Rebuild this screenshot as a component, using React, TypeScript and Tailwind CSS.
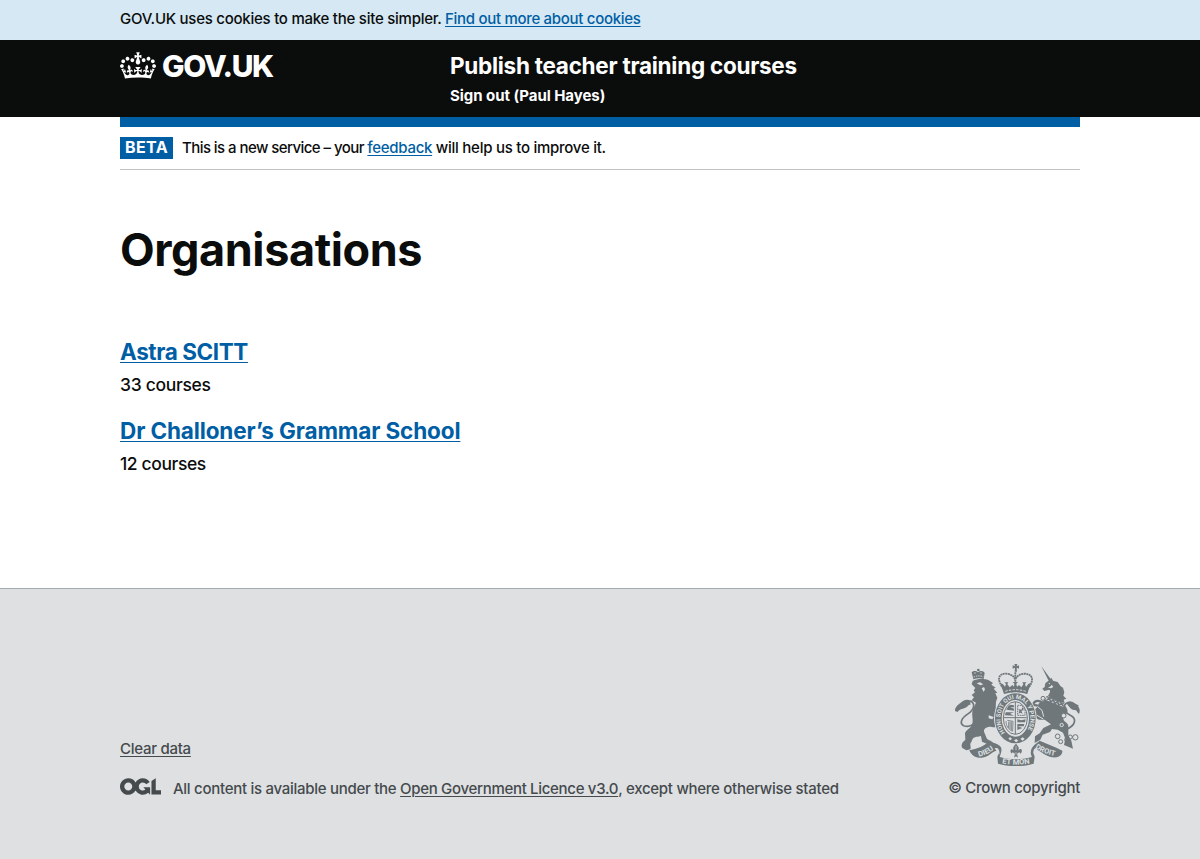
import type { ReactNode } from "react";

function Crown() {
  return (
    <svg viewBox="0 0 132 97" className="h-[27px] w-9 shrink-0 fill-white" aria-hidden="true">
      <path
        fillRule="evenodd"
        d="M25 30.2c3.5 1.5 7.7-.2 9.1-3.7 1.5-3.6-.2-7.8-3.9-9.2-3.6-1.4-7.6.3-9.1 3.9-1.4 3.5.3 7.5 3.9 9zM9 39.5c3.6 1.5 7.8-.2 9.2-3.7 1.5-3.6-.2-7.8-3.9-9.1-3.6-1.5-7.6.2-9.1 3.8-1.4 3.5.3 7.5 3.8 9zM4.4 57.2c3.5 1.5 7.7-.2 9.1-3.8 1.5-3.6-.2-7.7-3.9-9.1-3.5-1.5-7.6.3-9.1 3.8-1.4 3.5.3 7.6 3.9 9.1zm38.3-21.4c3.5 1.5 7.7-.2 9.1-3.8 1.5-3.6-.2-7.7-3.9-9.1-3.6-1.5-7.6.3-9.1 3.8-1.3 3.6.4 7.7 3.9 9.1zm64.4-5.6c-3.6 1.5-7.8-.2-9.1-3.7-1.5-3.6.2-7.8 3.8-9.2 3.6-1.4 7.7.3 9.2 3.9 1.3 3.5-.4 7.5-3.9 9zm15.9 9.3c-3.6 1.5-7.7-.2-9.1-3.7-1.5-3.6.2-7.8 3.7-9.1 3.6-1.5 7.7.2 9.2 3.8 1.5 3.5-.3 7.5-3.8 9zm4.7 17.7c-3.6 1.5-7.8-.2-9.2-3.8-1.5-3.6.2-7.7 3.9-9.1 3.6-1.5 7.7.3 9.2 3.8 1.3 3.5-.4 7.6-3.9 9.1zM89.3 35.8c-3.6 1.5-7.8-.2-9.2-3.8-1.4-3.6.2-7.7 3.9-9.1 3.6-1.5 7.7.3 9.2 3.8 1.4 3.6-.3 7.7-3.9 9.1zM69.7 17.7l8.9 4.7V9.3l-8.9 2.8c-.2-.3-.5-.6-.9-.9L72.4 0H59.6l3.5 11.2c-.3.3-.6.5-.9.9l-8.8-2.8v13.1l8.8-4.7c.3.3.6.7.9.9l-5 15.4v.1c-.2.8-.4 1.6-.4 2.4 0 4.1 3.1 7.5 7 8.1h.2c.3 0 .7.1 1 .1.4 0 .7 0 1-.1h.2c4-.6 7.1-4.1 7.1-8.1 0-.8-.1-1.7-.4-2.4V34l-5.1-15.4c.4-.2.7-.6 1-.9zM66 92.8c16.9 0 32.8 1.1 47.1 3.2 4-16.9 8.9-26.7 14-33.5l-9.6-3.4c1 4.9 1.1 7.2 0 10.2-1.5-1.4-3-4.3-4.2-8.7L108.6 76c2.8-2 5-3.2 7.5-3.3-4.4 9.4-10 11.9-13.6 11.2-4.3-.8-6.3-4.6-5.6-7.9 1-4.7 5.7-5.9 8-.5 4.3-8.7-3-11.4-7.6-8.8 7.1-7.2 7.9-13.5 2.1-21.1-8 6.1-8.1 12.3-4.5 20.8-4.7-5.4-12.1-2.5-9.5 6.2 3.4-5.2 7.9-2 7.2 3.1-.6 4.3-6.4 7.8-13.5 7.2-10.3-.9-10.9-8-11.2-13.8 2.5-.5 7.1 1.8 11 7.3L80.2 60c-4.1 4.4-8 5.3-12.3 5.4 1.4-4.4 8-11.6 8-11.6H55.5s6.4 7.2 7.9 11.6c-4.2-.1-8-1-12.3-5.4l1.4 16.4c3.9-5.5 8.5-7.7 10.9-7.3-.3 5.8-.9 12.8-11.1 13.8-7.2.6-12.9-2.9-13.5-7.2-.7-5 3.8-8.3 7.1-3.1 2.7-8.7-4.6-11.6-9.4-6.2 3.7-8.5 3.6-14.7-4.6-20.8-5.8 7.6-5 13.9 2.2 21.1-4.7-2.6-11.9.1-7.7 8.8 2.3-5.5 7.1-4.2 8.1.5.7 3.3-1.3 7.1-5.7 7.9-3.5.7-9-1.8-13.5-11.2 2.5.1 4.7 1.3 7.5 3.3l-4.7-15.4c-1.2 4.4-2.7 7.2-4.3 8.7-1.1-3-.9-5.3 0-10.2l-9.5 3.4c5 6.9 9.9 16.7 14 33.5 14.8-2.1 30.8-3.2 47.7-3.2z"
      />
    </svg>
  );
}

function OglLogo() {
  return (
    <svg viewBox="0 0 483.2 195.7" className="h-[17px] w-[41px] shrink-0 fill-[#454a4d]" aria-hidden="true">
      <path d="M421.5 142.8V.1l-50.7 32.3v161.1h112.4v-50.7zm-122.3-9.6A47.12 47.12 0 0 1 221 97.8c0-26 21.1-47.1 47.1-47.1 16.7 0 31.4 8.7 39.7 21.8l42.7-27.2A97.63 97.63 0 0 0 268.1 0c-36.5 0-68.3 20.1-85.1 49.7A98 98 0 0 0 97.8 0C43.9 0 0 43.9 0 97.8s43.9 97.8 97.8 97.8c36.5 0 68.3-20.1 85.1-49.7a97.76 97.76 0 0 0 149.6 25.4l19.4 22.2h3v-87.8h-80l24.3 27.5zM97.8 145c-26 0-47.1-21.1-47.1-47.1s21.1-47.1 47.1-47.1 47.1 21.1 47.1 47.1S123.8 145 97.8 145" />
    </svg>
  );
}

const INK = "#6f777b";
const PAPER = "#dee0e2";

function RoyalArms() {
  return (
    <svg viewBox="30 27 375 306" className="h-[102px] w-[125px]" fill={INK} fontFamily="Roboto, sans-serif" fontWeight="700" aria-hidden="true">
      {/* lion: tail, body, crown */}
      <path d="M76 137C92 146 88 162 70 176C48 190 42 206 58 213C72 217 85 210 94 196" fill="none" stroke={INK} strokeWidth="5" />
      <path d="M29 168C32 151 45 146 50 141C59 133 69 132 77 137L76 150C70 147 67 159 57 160C47 165 44 162 38 171Z" />
      <path d="M83 78C95 71 117 71 130 75L144 84L139 89L152 98L146 101L157 113L151 115L157 128L153 140C151 160 153 177 158 195C151 197 151 205 157 216C140 218 134 212 127 217C117 221 115 227 119 235L125 250C129 257 139 255 145 265L127 267L111 260L108 243C100 246 89 244 83 251L79 261C72 268 80 275 76 283L64 286L52 279C47 270 52 261 61 255L60 234C65 222 80 218 82 206C86 192 78 181 84 162L93 143L80 136L87 127L80 120L90 112L86 106L91 99L80 88Z" />
      <path d="M95 85L105 82L115 88L106 91ZM110 100L117 96L120 103L116 111ZM131 181L146 186L142 193L131 190Z" fill={PAPER} />
      <path d="M112 143L145 153L153 162L145 166L123 160L108 151Z" />
      <path d="M85 73L80 52C86 46 94 47 99 52C107 45 117 49 119 54L116 72Q100 67 85 73Z" />
      <path d="M86 66Q100 60 115 65M90 52V59M108 52V58" fill="none" stroke={PAPER} strokeWidth="3" strokeDasharray="4 3" />
      <circle cx="100" cy="45" r="4" />

      {/* central crown */}
      <path d="M208 27H217L215 34L222 31V41L215 38L216 50H209L210 38L203 41V31L210 34Z" />
      <g fill="none" stroke={INK} strokeWidth="5.5" strokeDasharray="6 1.5">
        <path d="M176 101C155 76 158 55 184 56C199 57 206 64 211 73C216 62 227 56 240 56C266 58 267 79 248 101" />
        <path d="M211 52V82" />
      </g>
      <path d="M166 84L174 88L180 95L183 87L178 82H190L187 88L194 97L202 90L207 95L208 86L203 81H219L214 86L216 95L222 90L229 97L235 88L232 82H244L240 88L243 96L250 87L257 84L247 117Q211 106 177 117Z" />
      <path d="M181 109Q211 99 242 109" fill="none" stroke={PAPER} strokeWidth="3" strokeDasharray="7 4" />

      {/* unicorn */}
      <path d="M289 34L317 72L311 77Z" />
      <path d="M301 85L312 76L319 68L324 77L338 81L347 94L354 98L358 112L355 122L364 131L356 134L359 144L328 138L309 122C314 114 318 108 313 104L298 108L292 101L299 96Z" />
      <path d="M320 89L325 96L318 100L309 98L317 94ZM310 86L315 83L315 88Z" fill={PAPER} />
      <path d="M306 123L358 146L366 161C373 176 356 182 355 191C356 202 371 202 370 215L370 241L379 257L384 281L370 275L357 270L361 251L354 233L338 224L321 222L315 231L293 239L286 254L269 264L270 244L284 235L295 219L318 208L299 194L282 194L268 187L263 167L275 159L282 145L295 139Z" />
      <path d="M303 130L361 153" stroke={PAPER} strokeWidth="11" />
      <path d="M304 125L358 147M300 136L360 160" stroke={INK} strokeWidth="3" />
      <path d="M305 134L313 131L317 140L325 136L330 145L337 141L342 150L350 146L355 154" fill="none" stroke={INK} strokeWidth="5" />
      <path d="M294 144C277 132 266 139 264 151C281 147 285 160 292 169L302 192M272 175L281 178L287 190" fill="none" stroke={INK} strokeWidth="7" />
      <path d="M277 154L291 166L296 185M276 181L295 192" fill="none" stroke={PAPER} strokeWidth="3" />
      <path d="M362 224C394 211 395 190 376 181C355 170 351 151 367 143C378 138 389 148 400 154" fill="none" stroke={INK} strokeWidth="5" />
      <path d="M365 145C376 133 389 143 393 150C403 155 407 164 402 177C395 170 395 165 389 165C379 166 373 157 365 145Z" />
      <g fill="none" stroke={INK} strokeWidth="3">
        <circle cx="294" cy="130" r="6" /><circle cx="356" cy="182" r="7" fill={PAPER} /><circle cx="350" cy="210" r="5" stroke={PAPER} />
        <circle cx="338" cy="244" r="7" /><circle cx="347" cy="260" r="6" /><circle cx="365" cy="254" r="6" />
        <circle cx="376" cy="246" r="6" /><circle cx="391" cy="247" r="8" />
      </g>

      {/* garter */}
      <ellipse cx="211" cy="190" rx="64" ry="77" fill={PAPER} />
      <ellipse cx="211" cy="190" rx="51" ry="65" fill="none" stroke={INK} strokeWidth="20" />
      <path id="garter" d="M180 233A45 59 0 1 1 242 233" fill="none" />
      <text fontSize="18" fill={PAPER}>
        <textPath href="#garter" textLength="244" lengthAdjust="spacing">HONI SOIT QUI MAL Y PENSE</textPath>
      </text>
      <path d="M190 250l6-3 5 5-6 4zM207 256l7-4 6 5-7 5zM226 252l7-5 6 4-6 6z" fill={PAPER} />

      {/* quartered shield */}
      <ellipse cx="211" cy="189" rx="37" ry="50" fill={PAPER} />
      <ellipse cx="211" cy="189" rx="36" ry="49" fill="none" stroke={INK} strokeWidth="3" />
      <path d="M211 141V237M177 188H245" stroke={INK} strokeWidth="3" />
      <path d="M190 153l7-4 10 2v6h-11l11 4v6l-23-3M182 172h25l-12 4 12 6-27-1M217 207h21l-2 7h-18l14 5-15 6M217 193l12 3 13-3-2 9h-23" />
      <path d="M218 151H231L240 166V181H218Z" fill="none" stroke={INK} strokeWidth="3" strokeDasharray="5 2" />
      <path d="M221 176l2-9-3-5 9 2 4-8 3 10-7 1 4 9-7-3z" />
      <path d="M183 198C183 213 190 223 203 229M187 196L204 199L203 228M191 200V219M195 200V222M199 200V225" fill="none" stroke={INK} strokeWidth="2.5" />

      {/* motto ribbon and fleur-de-lis */}
      <path d="M73 286C80 305 99 312 117 307C138 300 144 287 156 287C165 289 160 300 157 305L159 326C193 336 234 336 266 326L269 305C263 291 265 285 278 285C293 293 310 310 336 307C347 304 353 296 352 287L334 278L284 257L268 270C253 284 257 300 261 306Q211 320 164 306C168 295 174 280 164 272C151 263 137 259 126 264Q109 280 73 286Z" />
      <path d="M149 280C159 275 165 285 163 299C156 289 151 284 149 280ZM266 297C263 285 269 276 278 282Z" fill={PAPER} />
      <path d="M213 266C222 276 224 281 218 289C226 277 234 283 229 293C227 297 223 295 224 291L216 296L219 308L213 304L207 308L210 296L202 291C203 296 198 296 197 291C194 280 204 280 208 289C202 280 204 275 213 266Z" />
      <path d="M213 273V286M213 291V299" stroke={PAPER} strokeWidth="2" />
      <path id="ribbonLeft" d="M102 305Q130 298 149 281" fill="none" />
      <path id="ribbonRight" d="M270 279Q300 299 338 304" fill="none" />
      <path id="ribbonMid" d="M171 325Q211 333 256 325" fill="none" />
      <g fontSize="22" fill={PAPER}>
        <text><textPath href="#ribbonLeft" textLength="50" lengthAdjust="spacingAndGlyphs">DIEU</textPath></text>
        <text><textPath href="#ribbonRight" textLength="64" lengthAdjust="spacingAndGlyphs">DROIT</textPath></text>
        <text><textPath href="#ribbonMid" textLength="84" lengthAdjust="spacingAndGlyphs">ET MON</textPath></text>
      </g>
    </svg>
  );
}

function Container({ children, className = "" }: { children: ReactNode; className?: string }) {
  return <div className={`mx-auto w-[960px] ${className}`}>{children}</div>;
}

const organisations = [
  { name: "Astra SCITT", courses: "33 courses", tracking: "tracking-[-0.4px]", countTracking: "tracking-[-0.3px]" },
  { name: "Dr Challoner’s Grammar School", courses: "12 courses", tracking: "tracking-[-0.12px]", countTracking: "tracking-[-0.4px]" },
];

export default function App() {
  return (
    <div className="flex h-[859px] flex-col bg-white font-[Inter,sans-serif] text-[15px] leading-5 font-[450] text-[#0b0c0c]">
      <div className="h-10 bg-[#d5e8f3] pt-[9px]">
        <Container className="flex gap-[4px] whitespace-nowrap">
          <span className="w-[321px] tracking-[-0.25px]">GOV.UK uses cookies to make the site simpler.</span>
          <a href="#" className="tracking-[-0.3px] text-[#005ea5] underline underline-offset-2">Find out more about cookies</a>
        </Container>
      </div>

      <header className="h-[77px] bg-[#0b0c0c] font-bold text-white">
        <Container className="flex">
          <a href="#" className="flex w-[330px] items-start gap-[6px] pt-[12px]">
            <Crown />
            <span className="text-[30px] leading-[29px] font-extrabold tracking-[-1.4px]">GOV.UK</span>
          </a>
          <div className="pt-[11px]">
            <div className="text-[22.5px] leading-[30px] tracking-[-0.27px]">Publish teacher training courses</div>
            <a href="#" className="mt-[5px] block tracking-[-0.05px]">Sign out (Paul Hayes)</a>
          </div>
        </Container>
      </header>

      <Container className="flex-1">
        <div className="h-[10px] bg-[#005ea5]" />
        <div className="flex h-[43px] items-start border-b border-[#bfc1c3] pt-[10px] whitespace-nowrap">
          <strong className="mr-[9px] h-[22px] w-[53px] bg-[#005ea5] text-center text-base leading-[21px] font-bold tracking-[0.4px] text-white">BETA</strong>
          <span className="mt-[1px] tracking-[-0.56px]">
            This is a new service – your{" "}
            <a href="#" className="tracking-[-0.3px] text-[#005ea5] underline underline-offset-2">feedback</a>
            <span className="tracking-[-0.26px]"> will help us to improve it.</span>
          </span>
        </div>

        <main className="pt-[55px]">
          <h1 className="text-[45px] leading-[50px] font-bold tracking-[-0.42px]">Organisations</h1>
          <ul className="mt-[62px] flex flex-col gap-[20px]">
            {organisations.map((org) => (
              <li key={org.name} className="h-[59px]">
                <h2 className="text-[22.5px] leading-[30px] font-bold">
                  <a href="#" className={`${org.tracking} text-[#005ea5] underline decoration-1 underline-offset-2`}>{org.name}</a>
                </h2>
                <p className={`mt-[5px] text-[17.5px] leading-[25px] ${org.countTracking}`}>{org.courses}</p>
              </li>
            ))}
          </ul>
        </main>
      </Container>

      <footer className="h-[271px] border-t border-[#a1acb2] bg-[#dee0e2] text-[#454a4d]">
        <Container className="flex justify-between">
          <div className="pt-[150px]">
            <a href="#" className="inline-block tracking-[-0.27px] underline underline-offset-2">Clear data</a>
            <div className="mt-[19px] flex items-start gap-[12px] whitespace-nowrap">
              <OglLogo />
              <span className="mt-[1px] tracking-[-0.28px]">
                All content is available under the{" "}
                <a href="#" className="tracking-[-0.31px] underline underline-offset-2">Open Government Licence v3.0</a>, except where otherwise stated
              </span>
            </div>
          </div>
          <div className="flex flex-col items-end pt-[75px]">
            <RoyalArms />
            <span className="mt-[12px] tracking-[-0.31px] whitespace-nowrap">© Crown copyright</span>
          </div>
        </Container>
      </footer>
    </div>
  );
}
